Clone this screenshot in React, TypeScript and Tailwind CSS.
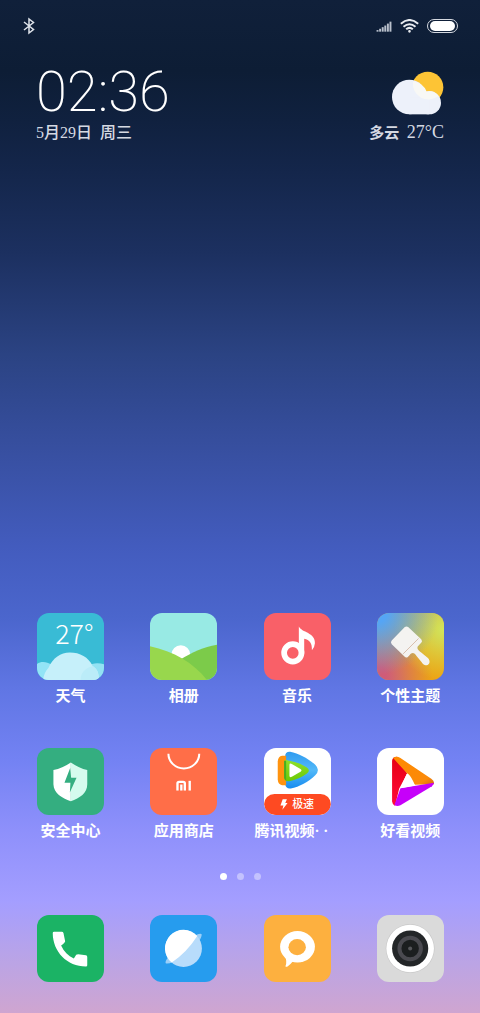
import React from 'react';

type App = {
  name: string;
  bg: string;
  icon: React.ReactNode;
};

const svgClass = 'block h-full w-full';

function WeatherIcon() {
  return (
    <div className="relative h-full w-full">
      <svg viewBox="0 0 200 200" className={svgClass}>
        <path d="M0 152C12 143 30 145 42 154L60 200H0Z" fill="#93e4f6" />
        <path d="M150 158C166 148 185 148 200 153V200H140Z" fill="#93e2f3" />
        <path d="M18 200C20 184 26 172 34 164C48 134 70 118 98 118C128 118 154 132 166 158C180 166 186 182 184 200Z" fill="#c6f0fa" />
        <path d="M130 200C130 178 144 164 166 158C180 166 186 182 184 200Z" fill="#bbecf8" />
      </svg>
      <span className="absolute left-[18px] top-1 font-['Noto_Sans_CJK_SC'] text-[27px] font-light leading-8 text-white">
        27°
      </span>
    </div>
  );
}

function GalleryIcon() {
  return (
    <svg viewBox="0 0 200 200" className={svgClass}>
      <circle cx="92" cy="124" r="28" fill="#fff" />
      <path d="M92 138C125 118 160 102 200 95V200H92Z" fill="#7ccb4a" />
      <path d="M0 99C70 114 130 148 170 200H0Z" fill="#98d74d" />
    </svg>
  );
}

function MusicIcon() {
  return (
    <svg viewBox="0 0 200 200" className={svgClass}>
      <circle cx="86" cy="119" r="26" fill="none" stroke="#fff" strokeWidth="17" />
      <path d="M104 40C112 58 154 58 152 90Q151 103 143 111C144 90 136 80 120 77V122H104Z" fill="#fff" />
    </svg>
  );
}

function ThemeIcon() {
  return (
    <div className="h-full w-full bg-[radial-gradient(circle_at_0%_0%,#55a5f5_10%,transparent_65%),radial-gradient(circle_at_100%_25%,#d2e65a_0%,transparent_60%),radial-gradient(circle_at_0%_95%,#d05c78_10%,transparent_60%),radial-gradient(circle_at_85%_90%,#eca414_30%,#b2a070_100%)]">
      <svg viewBox="0 0 200 200" className={svgClass}>
        <path d="M83 42Q88 38 93 42L132 78Q137 84 132 89L122 99C118 106 124 112 132 118L152 134C160 142 158 154 148 156C142 157 138 154 134 148L118 128C112 118 104 116 97 126L92 131Q87 135 82 130L44 93Q39 87 44 82Z" fill="#f4f3f1" />
        <path d="M78 122L124 76" stroke="#c9a48c" strokeWidth="2" />
      </svg>
    </div>
  );
}

function SecurityIcon() {
  return (
    <svg viewBox="0 0 200 200" className={svgClass}>
      <path d="M101 43Q76 60 49 66V108C50 136 74 148 101 159Z" fill="#fff" />
      <path d="M101 43Q126 60 150 66V108C150 136 128 148 101 159Z" fill="#d5fbee" />
      <path d="M99 60L82 104H100L98 133L118 89H102Z" fill="#34ae80" />
    </svg>
  );
}

function StoreIcon() {
  return (
    <svg viewBox="0 0 200 200" className={svgClass}>
      <path d="M55 17A46 44 0 0 0 147 17" fill="none" stroke="#fff" strokeWidth="6" />
      <rect x="82" y="101" width="22" height="34" rx="5" fill="none" stroke="#fff" strokeWidth="7" />
      <rect x="76" y="127" width="34" height="14" fill="#ff6e48" />
      <rect x="90" y="109" width="7" height="18" fill="#fff" />
      <rect x="115" y="98" width="7" height="29" fill="#fff" />
    </svg>
  );
}

function TencentIcon() {
  return (
    <div className="relative h-full w-full">
      <svg viewBox="0 0 200 200" className={svgClass}>
        <defs>
          <linearGradient id="tv-blue" x1="0" y1="0" x2="0" y2="1">
            <stop offset="0" stopColor="#2f9bf0" />
            <stop offset=".5" stopColor="#52b8f8" />
            <stop offset="1" stopColor="#168bf0" />
          </linearGradient>
          <linearGradient id="tv-green" x1="0" y1="0" x2="0" y2="1">
            <stop offset="0" stopColor="#8fe02a" />
            <stop offset="1" stopColor="#6bc806" />
          </linearGradient>
        </defs>
        <path d="M63 26Q63 10 78 11C104 16 130 30 153 50Q169 66 153 81C132 101 106 115 80 121Q65 123 63 107Z" fill="url(#tv-blue)" />
        <path d="M54 23H66V111H54Q42 109 41 94V40Q42 25 54 23Z" fill="#ff930f" />
        <path d="M60 46Q59 33 72 37Q104 42 128 58Q140 67 128 76Q104 94 75 99Q62 101 60 88Z" fill="url(#tv-green)" />
        <path d="M60 38H66V98Q60 94 60 88Z" fill="#46ad22" />
        <path d="M76 51Q76 44 83 48L109 63Q115 67 109 71L83 86Q76 90 76 83Z" fill="#fff" />
      </svg>
      <div className="absolute inset-x-0 bottom-0 flex h-[21px] items-center justify-center gap-1 rounded-full bg-[#fe4a22] text-[11px] font-medium leading-none text-white">
        <svg viewBox="0 0 22 34" className="h-[11px] w-2">
          <path d="M7 1H20L15 12H22L6 33L9 20H0Z" fill="#fff" />
        </svg>
        极速
      </div>
    </div>
  );
}

function HaokanIcon() {
  return (
    <svg viewBox="0 0 200 200" className={svgClass}>
      <defs>
        <linearGradient id="hk-red" x1="0" y1="0" x2="0" y2="1">
          <stop offset="0" stopColor="#e60012" />
          <stop offset="1" stopColor="#ff0a3a" />
        </linearGradient>
        <linearGradient id="hk-orange" x1="0" y1="0" x2="1" y2="1">
          <stop offset="0" stopColor="#ff8a00" />
          <stop offset=".8" stopColor="#fb8a0a" />
          <stop offset="1" stopColor="#d46a10" />
        </linearGradient>
      </defs>
      <path d="M45 38Q46 26 60 26L90 76L66 122L54 173Q46 170 45 160Z" fill="url(#hk-red)" />
      <path d="M48 30Q58 22 70 30L162 92Q172 98 170 108L112 110L88 74Z" fill="url(#hk-orange)" />
      <path d="M70 120L170 104Q169 110 164 114L70 171Q60 176 52 170Z" fill="#c600fa" />
      <path d="M88 78L70 120L114 112Q102 84 94 78Q91 74 88 78Z" fill="#fff" />
    </svg>
  );
}

function PhoneIcon() {
  return (
    <svg viewBox="0 0 200 200" className={svgClass}>
      <path d="M51 50H74Q78 50 79 54L84 78Q84 82 72 91C80 109 93 122 110 130L117 119Q119 117 123 117L146 120Q150 121 150 125V150Q150 154 146 154C90 154 47 110 47 54Q47 50 51 50Z" fill="#fff" />
    </svg>
  );
}

function BrowserIcon() {
  return (
    <svg viewBox="0 0 200 200" className={svgClass}>
      <path d="M134 61Q148 54 154 57Q156 66 142 84ZM54 126Q44 139 47 144Q54 146 69 140Z" fill="#9bcff8" />
      <circle cx="100" cy="100" r="55" fill="#b8dcfb" />
      <path d="M65 142A55 55 0 1 1 141 63Q110 112 65 142Z" fill="#fff" />
    </svg>
  );
}

function ChatIcon() {
  return (
    <svg viewBox="0 0 200 200" className={svgClass}>
      <ellipse cx="100" cy="95" rx="52" ry="47" fill="#fff" />
      <path d="M62 122Q70 140 64 153Q66 157 72 152Q80 146 87 137Z" fill="#fff" />
      <ellipse cx="99" cy="96" rx="26" ry="24" fill="#fdb03f" />
    </svg>
  );
}

function CameraIcon() {
  return (
    <svg viewBox="0 0 200 200" className={svgClass}>
      <circle cx="99" cy="100" r="73" fill="#c9c9c9" />
      <circle cx="99" cy="100" r="71" fill="#fff" />
      <circle cx="99" cy="100" r="54" fill="#232628" />
      <circle cx="99" cy="100" r="32" fill="#1b1e1f" stroke="#4a4a50" strokeWidth="12" />
      <circle cx="99" cy="100" r="6" fill="#55565a" />
    </svg>
  );
}

const apps: App[] = [
  { name: '天气', bg: 'bg-[#39bbd5]', icon: <WeatherIcon /> },
  { name: '相册', bg: 'bg-[#98eae4]', icon: <GalleryIcon /> },
  { name: '音乐', bg: 'bg-[#f96068]', icon: <MusicIcon /> },
  { name: '个性主题', bg: 'bg-[#b2a070]', icon: <ThemeIcon /> },
  { name: '安全中心', bg: 'bg-[#34ae80]', icon: <SecurityIcon /> },
  { name: '应用商店', bg: 'bg-[#ff6e48]', icon: <StoreIcon /> },
  { name: '腾讯视频·\u00a0·\u00a0\u00a0\u00a0', bg: 'bg-white', icon: <TencentIcon /> },
  { name: '好看视频', bg: 'bg-white', icon: <HaokanIcon /> },
];

const dock: App[] = [
  { name: '电话', bg: 'bg-[#1bb365]', icon: <PhoneIcon /> },
  { name: '浏览器', bg: 'bg-[#269cee]', icon: <BrowserIcon /> },
  { name: '短信', bg: 'bg-[#fdb03f]', icon: <ChatIcon /> },
  { name: '相机', bg: 'bg-[#dadada]', icon: <CameraIcon /> },
];

function AppButton({ app, label = true }: { app: App; label?: boolean }) {
  return (
    <button type="button" aria-label={app.name} className="flex flex-col items-center">
      <span className={`block size-[67px] overflow-hidden rounded-xl ${app.bg}`}>{app.icon}</span>
      {label && (
        <span className="mt-1 whitespace-nowrap text-[15px] font-bold leading-6 text-white">
          {app.name}
        </span>
      )}
    </button>
  );
}

function StatusBar() {
  return (
    <header className="flex h-[52px] items-center px-[22px]">
      <svg viewBox="0 0 14 18" className="h-[18px] w-[14px]" fill="none" stroke="#dfe3ea" strokeWidth="1.5">
        <path d="M2 5L11.500 12.500L7 16V2L11.500 5.500L2 13" />
      </svg>
      <div className="ml-auto flex items-center gap-2">
        <svg viewBox="0 0 48 34" className="h-[11px] w-4" fill="#b9c0cc">
          <rect x="1" y="28" width="6" height="5" />
          <rect x="9" y="24" width="6" height="9" />
          <rect x="17" y="19" width="6" height="14" />
          <rect x="25" y="14" width="6" height="19" />
          <rect x="33" y="8" width="6" height="25" />
          <rect x="41" y="2" width="6" height="31" />
        </svg>
        <svg viewBox="0 0 56 42" className="h-[14px] w-[19px]" fill="none" stroke="#e8ebf0" strokeWidth="6">
          <path d="M2 14Q28 -8 54 14" />
          <path d="M10 23Q28 8 46 23" />
          <path d="M18 31Q28 22 38 31" />
          <circle cx="28" cy="37" r="2" fill="#e8ebf0" strokeWidth="4" />
        </svg>
        <div className="h-[14px] w-[31px] rounded-full border border-[#d5d9e0] px-[2px] py-px">
          <div className="h-full rounded-full bg-white" />
        </div>
      </div>
    </header>
  );
}

function App() {
  return (
    <div className="flex min-h-screen flex-col bg-[linear-gradient(180deg,#10203a_0%,#0d1d35_7%,#10213f_12%,#14264b_17%,#1c3060_25%,#2b4383_35%,#3850a2_45%,#435cbe_54%,#4b66cd_61%,#6076e4_68%,#7382f3_75%,#8e90fb_82%,#a49eff_89%,#bba4e5_95%,#cfa5d0_100%)] font-['Liberation_Serif','Noto_Sans_CJK_SC',sans-serif]">
      <StatusBar />

      <section className="flex justify-between px-9 pt-3 text-white">
        <div>
          <div className="font-['Roboto'] text-[56px] font-extralight leading-[56px]">02:36</div>
          <div className="mt-px text-[16px] font-medium leading-6 text-[#d5d9e2]">5月29日&nbsp; 周三</div>
        </div>
        <div className="flex flex-col items-end">
          <svg viewBox="0 0 156 132" className="mt-[7px] h-[44px] w-[52px]">
            <circle cx="107" cy="49" r="47" fill="#fdc435" />
            <circle cx="52" cy="78" r="52" fill="#edf1fa" />
            <circle cx="112" cy="95" r="35" fill="#edf1fa" />
            <rect x="52" y="80" width="60" height="50" fill="#edf1fa" />
            <path d="M63 31A52 52 0 0 1 104 62A35 35 0 0 1 139 75A47 47 0 0 1 63 31Z" fill="#f8f8f5" />
          </svg>
          <div className="mt-[5px] text-[15px] font-bold leading-6 text-[#d5d9e2]">
            多云&nbsp; <span className="text-[18px] font-normal">27°C</span>
          </div>
        </div>
      </section>

      <main className="mt-auto grid grid-cols-4 gap-y-10 pl-[14px] pr-[13px]">
        {apps.map((app) => (
          <AppButton key={app.name} app={app} />
        ))}
      </main>

      <div className="mt-[30px] flex justify-center gap-[10px]">
        <span className="size-[7px] rounded-full bg-white" />
        <span className="size-[7px] rounded-full bg-white/40" />
        <span className="size-[7px] rounded-full bg-white/40" />
      </div>

      <nav className="mb-[31px] mt-[35px] grid grid-cols-4 pl-[14px] pr-[13px]">
        {dock.map((app) => (
          <AppButton key={app.name} app={app} label={false} />
        ))}
      </nav>
    </div>
  );
}

export default App;
